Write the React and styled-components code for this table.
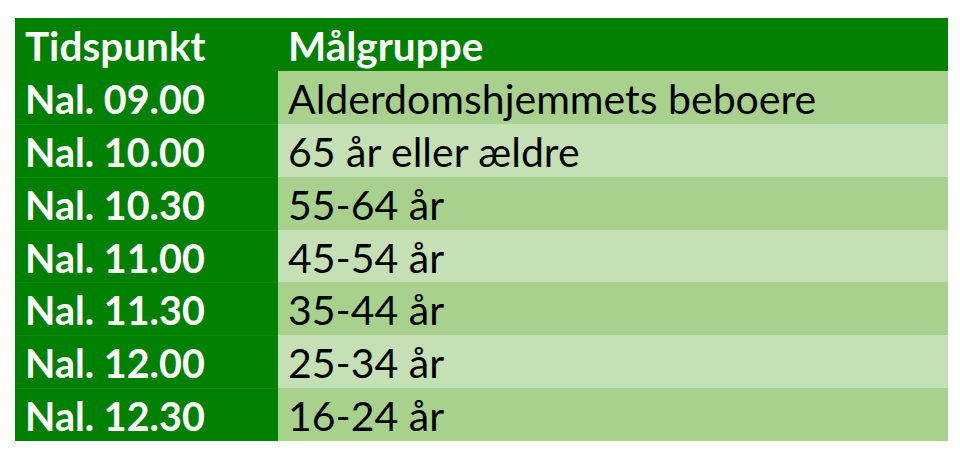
import React from "react";
import styled, { createGlobalStyle } from "styled-components";

const Global = createGlobalStyle`
  html, body { margin: 0; padding: 0; background: #ffffff; }
  body { width: 960px; height: 458px; overflow: hidden; }
`;

const Page = styled.div`
  padding: 18px 12px 0 15px;
`;

const Table = styled.div`
  display: grid;
  grid-template-columns: 263px 670px;
  grid-template-rows: 53px repeat(7, 52.86px);
  width: 933px;
  font-family: Lato, "Liberation Sans", sans-serif;
`;

const Cell = styled.div`
  display: flex;
  align-items: center;
  padding: 1px 10px 0;
  box-sizing: border-box;
  white-space: nowrap;
  overflow: hidden;
  background: ${(p) => p.$bg};
  color: ${(p) => (p.$dark ? "#000000" : "#ffffff")};
  font-weight: ${(p) => (p.$bold ? 700 : 400)};
  font-size: ${(p) => (p.$bold ? "39.5px" : "41px")};
  border-top: 1px solid ${(p) => p.$line || "transparent"};
`;

const HeadCell = styled(Cell)`
  border-top: none;
  padding-top: 2px;
  font-size: 40.5px;
`;

const rows = [
  ["Nal. 09.00", "Alderdomshjemmets beboere"],
  ["Nal. 10.00", "65 år eller ældre"],
  ["Nal. 10.30", "55-64 år"],
  ["Nal. 11.00", "45-54 år"],
  ["Nal. 11.30", "35-44 år"],
  ["Nal. 12.00", "25-34 år"],
  ["Nal. 12.30", "16-24 år"],
];

const GREEN = "#008000";

export default function App() {
  return (
    <>
      <Global />
      <Page>
        <Table>
          <HeadCell $bg={GREEN} $bold>Tidspunkt</HeadCell>
          <HeadCell $bg={GREEN} $bold>Målgruppe</HeadCell>
          {rows.map(([t, g], i) => (
            <React.Fragment key={t}>
              <Cell $bg={GREEN} $bold $line={i === 0 ? "transparent" : "#0d880d"}>
                {t}
              </Cell>
              <Cell
                $bg={i % 2 === 0 ? "#a9d18e" : "#c5e0b4"}
                $dark
                $line="transparent"
              >
                {g}
              </Cell>
            </React.Fragment>
          ))}
        </Table>
      </Page>
    </>
  );
}
